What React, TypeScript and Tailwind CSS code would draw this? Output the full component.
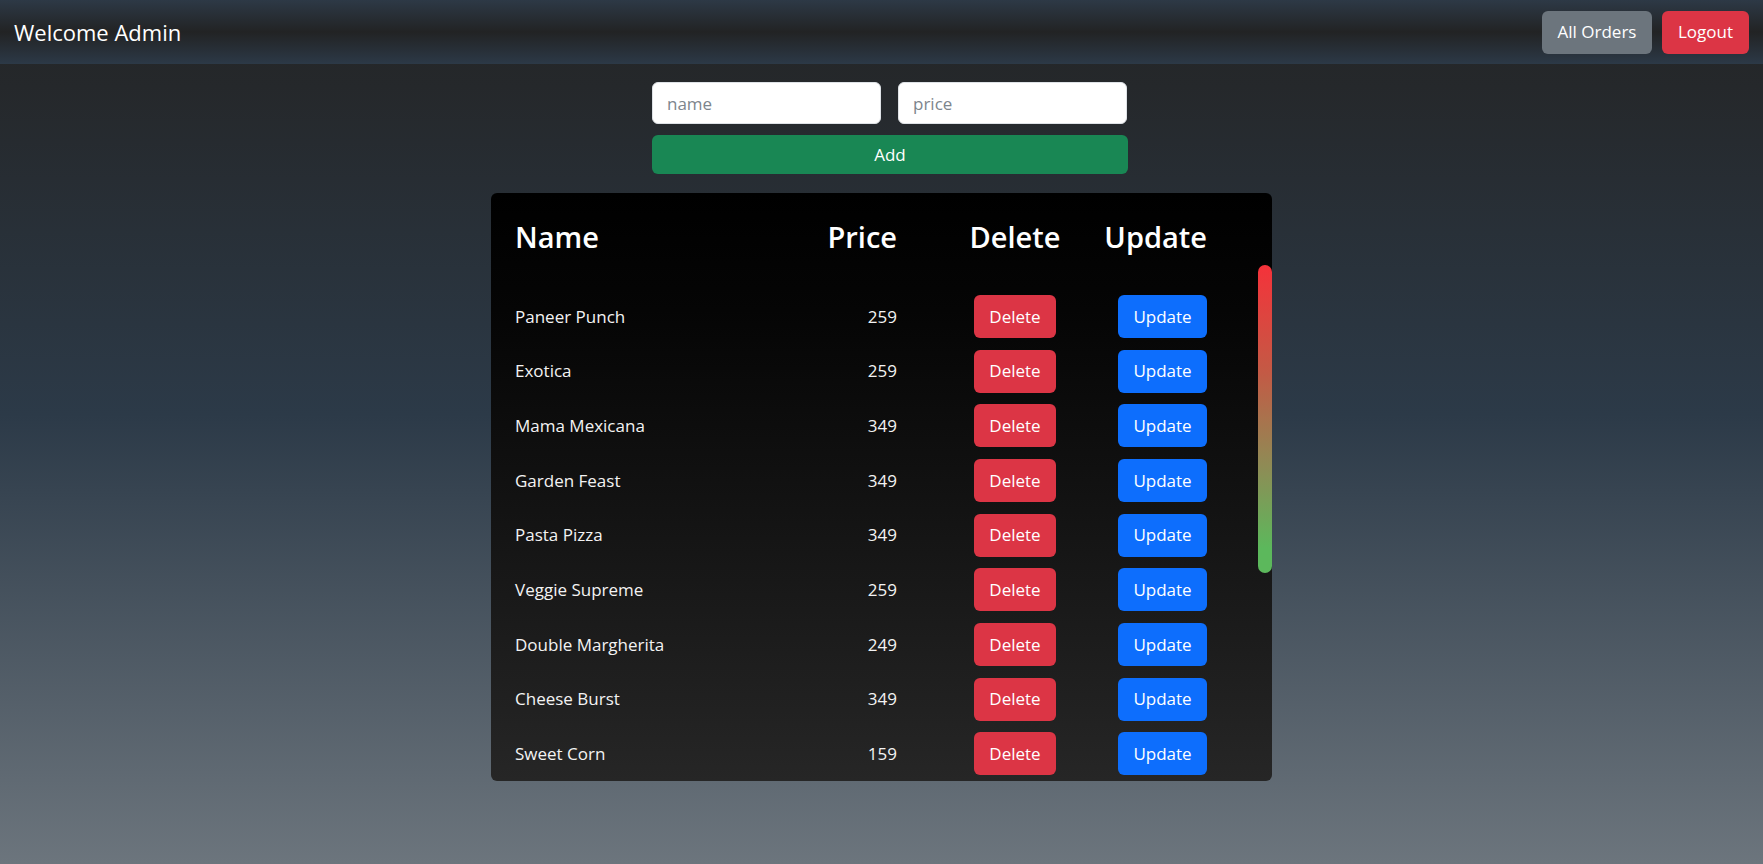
import React from "react";

const items: [string, number][] = [
  ["Paneer Punch", 259],
  ["Exotica", 259],
  ["Mama Mexicana", 349],
  ["Garden Feast", 349],
  ["Pasta Pizza", 349],
  ["Veggie Supreme", 259],
  ["Double Margherita", 249],
  ["Cheese Burst", 349],
  ["Sweet Corn", 159],
];

export default function App() {
  return (
    <div className="min-h-[864px] w-full font-['Open_Sans',sans-serif] bg-[linear-gradient(180deg,#232526_0%,#25282b_10%,#2c3a48_48%,#6c757d_100%)]">
      <header className="h-[64px] flex items-center justify-between pl-[14px] pr-[14px] bg-[linear-gradient(180deg,#2d3946_0%,#222324_50%,#2c3947_100%)]">
        <span className="text-white text-[22px] leading-none">Welcome Admin</span>
        <div className="flex gap-[10px]">
          <button className="w-[110px] h-[43px] rounded-[6px] bg-[#6c757d] text-white text-[17px]">All Orders</button>
          <button className="w-[87px] h-[43px] rounded-[6px] bg-[#dc3545] text-white text-[17px]">Logout</button>
        </div>
      </header>

      <div className="flex justify-center pt-[18px]">
        <div className="w-[493px] pl-[17px] flex flex-col gap-[11px]">
          <div className="flex gap-[17px]">
            <input
              placeholder="name"
              className="w-[229px] h-[42px] rounded-[6px] bg-white border border-[#dee2e6] px-[14px] text-[17px] text-[#212529] placeholder:text-[#7d858c] outline-none"
            />
            <input
              placeholder="price"
              className="w-[229px] h-[42px] rounded-[6px] bg-white border border-[#dee2e6] px-[14px] text-[17px] text-[#212529] placeholder:text-[#7d858c] outline-none"
            />
          </div>
          <button className="w-[476px] h-[39px] rounded-[6px] bg-[#198754] text-white text-[17px]">Add</button>
        </div>
      </div>

      <div className="flex justify-center pt-[19px]">
        <div className="w-[781px] h-[588px] rounded-[6px] overflow-hidden flex flex-col bg-[linear-gradient(180deg,#000000_0%,#050505_20%,#262626_100%)]">
          <div className="h-[72px] shrink-0 pt-[25px] pl-[24px] grid grid-cols-[282px_148px_140px_122px] text-white text-[29px] leading-[38px] font-semibold">
            <div>Name</div>
            <div className="text-right pr-[48px]">Price</div>
            <div className="text-center">Delete</div>
            <div className="text-right">Update</div>
          </div>
          <div className="relative h-[516px] overflow-hidden pt-[24px] pr-[14px]">
            {items.map(([name, price]) => (
              <div
                key={name}
                className="h-[54.7px] pl-[24px] grid grid-cols-[282px_148px_140px_122px] items-center text-[#f3f3f3] text-[17px]"
              >
                <div>{name}</div>
                <div className="text-right pr-[48px]">{price}</div>
                <div className="flex justify-center">
                  <button className="w-[82px] h-[43px] rounded-[6px] bg-[#dc3545] text-white text-[17px]">Delete</button>
                </div>
                <div className="flex justify-end">
                  <button className="w-[89px] h-[43px] rounded-[6px] bg-[#0d6efd] text-white text-[17px]">Update</button>
                </div>
              </div>
            ))}
            <div className="absolute right-0 top-0 w-[14px] h-[308px] rounded-full bg-[linear-gradient(180deg,#f5323a_0%,#c35a45_35%,#8f8b55_65%,#5cb85c_92%)]" />
          </div>
        </div>
      </div>
    </div>
  );
}
